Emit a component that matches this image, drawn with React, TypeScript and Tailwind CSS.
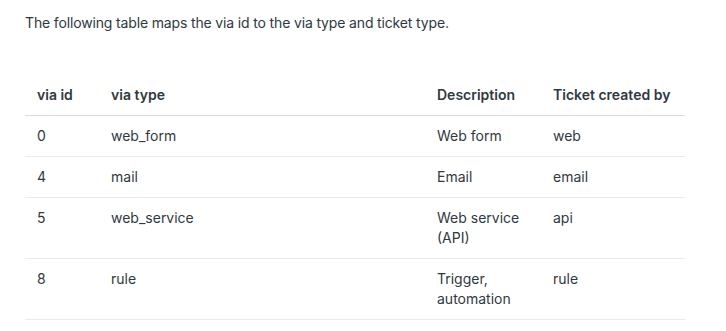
import React from "react";

/** via id -> via type / ticket type rows */
const rows = [
  { id: "0", type: "web_form", description: ["Web form"], createdBy: "web" },
  { id: "4", type: "mail", description: ["Email"], createdBy: "email" },
  { id: "5", type: "web_service", description: ["Web service", "(API)"], createdBy: "api" },
  { id: "8", type: "rule", description: ["Trigger,", "automation"], createdBy: "rule" },
];

export default function App() {
  return (
    <div
      className="bg-white w-[726px] h-[331px] px-[25px] pt-[13px] text-[14px] leading-[20px] text-[#2f3941]"
      style={{ fontFamily: "Inter, 'Liberation Sans', sans-serif" }}
    >
      <p className="tracking-[-0.15px]">
        The following table maps the via id to the via type and ticket type.
      </p>

      <table className="mt-[42px] w-[660px] table-fixed border-collapse text-left">
        <colgroup>
          <col className="w-[74px]" />
          <col className="w-[326px]" />
          <col className="w-[116px]" />
          <col className="w-[144px]" />
        </colgroup>
        <thead>
          <tr className="border-b border-[#d8dcde]">
            <th className="px-3 py-[10px] font-semibold align-top">via id</th>
            <th className="px-3 py-[10px] font-semibold align-top">via type</th>
            <th className="px-3 py-[10px] font-semibold align-top">Description</th>
            <th className="px-3 py-[10px] font-semibold align-top">Ticket created by</th>
          </tr>
        </thead>
        <tbody>
          {rows.map((row) => (
            <tr key={row.id} className="border-b border-[#e9ebed]">
              <td className="px-3 py-[10px] align-top">{row.id}</td>
              <td className="px-3 py-[10px] align-top">{row.type}</td>
              <td className="px-3 py-[10px] align-top">
                {row.description.map((line) => (
                  <div key={line}>{line}</div>
                ))}
              </td>
              <td className="px-3 py-[10px] align-top">{row.createdBy}</td>
            </tr>
          ))}
        </tbody>
      </table>
    </div>
  );
}
